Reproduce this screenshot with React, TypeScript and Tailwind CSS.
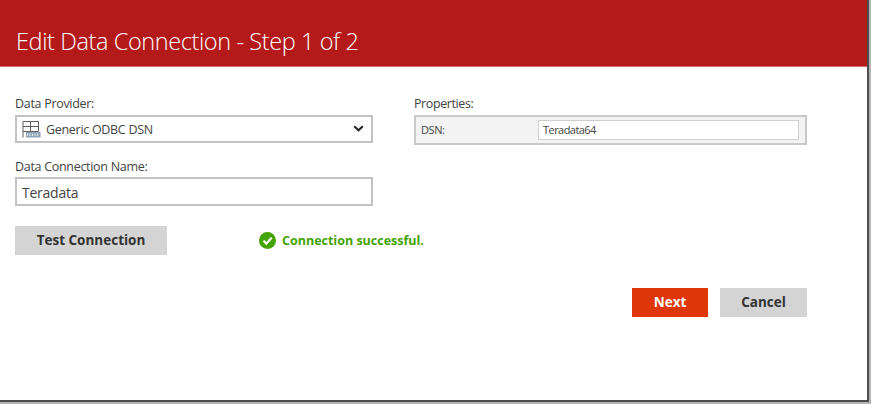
export default function App() {
  const font = "font-['Open_Sans','Noto_Sans',sans-serif]";
  return (
    <div className={`w-[871px] h-[404px] bg-[#b4b4b4] pr-[2px] pb-[2px] ${font}`}>
      <div className="w-[869px] h-[402px] bg-white border-r-2 border-b-2 border-[#4d4d4d] flex flex-col">
        <header className="h-[67px] shrink-0 bg-[#b41a1a] border-b border-[#d96a6a] pl-[16px] pt-[24px]">
          <h1 className="text-[23.5px] leading-[34px] font-light tracking-[-0.4px] text-white whitespace-nowrap">Edit Data Connection - Step 1 of 2</h1>
        </header>
        <main className="flex-1 pl-[15px] pr-[60px] flex flex-col">
          <div className="flex mt-[28px] gap-[41px]">
            <div className="w-[358px] flex flex-col">
              <label className="text-[12.5px] leading-[19px] h-[20px] tracking-[-0.3px] text-[#444] -mt-[1px] mb-[1px]">Data Provider:</label>
              <div className="h-[28px] border-2 border-[#c3c3c3] flex items-center pl-[5px] pr-[7px]">
                <svg width="19" height="17" viewBox="0 0 19 17" fill="none" className="shrink-0">
                  <path d="M1 16.5V.5h15.5V10M1 5.5h15.5M1 10.5h15.5M8.5.5v10" stroke="#5f5f5f" strokeWidth="1" />
                  <rect x="4" y="11" width="14.5" height="5.5" fill="#8ea3b8" />
                  <path d="M5.5 12.5v2.5M8 12.5v2.5M10.5 12.5v2.5M13 12.5v2.5M15.5 12.5v2.5" stroke="#e8eef4" strokeWidth="1" />
                </svg>
                <span className="ml-[5px] flex-1 text-[12.5px] tracking-[-0.3px] text-[#444] whitespace-nowrap mt-[3px]">Generic ODBC DSN</span>
                <svg width="11" height="7" viewBox="0 0 11 7" fill="none" className="shrink-0 mb-[1px]">
                  <path d="M1.2 1.2 5.5 5.3 9.8 1.2" stroke="#222" strokeWidth="2" />
                </svg>
              </div>
              <label className="mt-[14px] text-[12.5px] leading-[19px] h-[20px] tracking-[-0.3px] text-[#444]">Data Connection Name:</label>
              <div className="h-[29px] border-2 border-[#c3c3c3] flex items-center pl-[5px] pt-[2px] text-[14px] tracking-[-0.25px] text-[#444]">Teradata</div>
            </div>
            <div className="w-[393px] flex flex-col">
              <label className="text-[12.5px] leading-[19px] h-[20px] tracking-[-0.4px] text-[#444] -mt-[1px]">Properties:</label>
              <div className="h-[30px] mt-[1px] border-2 border-[#c9c9c9] bg-[#f3f3f3] flex items-center pl-[5px] pr-[6px]">
                <span className="w-[117px] text-[11px] tracking-[-0.4px] text-[#444]">DSN:</span>
                <div className="flex-1 h-[20px] bg-white border border-[#cfcfcf] flex items-center pl-[4px] text-[11px] tracking-[-0.55px] text-[#444]">Teradata64</div>
              </div>
            </div>
          </div>
          <div className="flex items-center mt-[20px]">
            <button className="w-[152px] h-[29px] bg-[#d4d4d4] text-[13.5px] font-bold text-[#333]">Test Connection</button>
            <svg width="17" height="17" viewBox="0 0 17 17" className="ml-[92px] shrink-0">
              <circle cx="8.5" cy="8.5" r="8.5" fill="#43a300" />
              <path d="M4.5 8.8 7.3 11.6 12.6 5.8" stroke="#fff" strokeWidth="2.2" fill="none" />
            </svg>
            <span className="ml-[6px] text-[12.5px] font-bold text-[#43a300] whitespace-nowrap mt-[2px]">Connection successful.</span>
          </div>
          <div className="flex justify-end gap-[12px] mt-[33px]">
            <button className="w-[76px] h-[29px] bg-[#de3608] text-[13.5px] font-bold text-white">Next</button>
            <button className="w-[87px] h-[29px] bg-[#d4d4d4] text-[13.5px] font-bold text-[#333]">Cancel</button>
          </div>
        </main>
      </div>
    </div>
  );
}
